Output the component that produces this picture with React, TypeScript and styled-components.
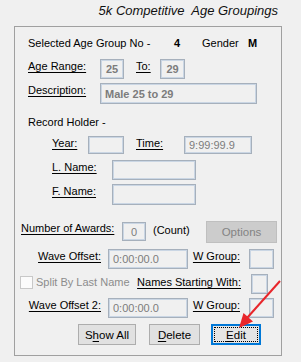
import React from 'react';
import styled, { createGlobalStyle } from 'styled-components';

const GlobalStyle = createGlobalStyle`
    body {
        margin: 0;
        background: #f0f0f0;
        font-family: 'Liberation Sans', Arial, sans-serif;
        font-size: 11px;
        color: #000;
    }
`;

const Page = styled.div`
    position: relative;
    width: 301px;
    height: 362px;
    overflow: hidden;
`;

const Title = styled.div`
    padding: 3px 23px 0 0;
    margin-bottom: 8px;
    text-align: right;
    font-size: 13px;
    font-style: italic;
    line-height: 15px;
    white-space: pre;
    color: #111;
`;

const Frame = styled.div`
    margin-left: 14px;
    width: 268px;
    box-sizing: border-box;
    border: 1px solid #a0a0a0;
    padding-bottom: 10px;
`;

const Row = styled.div<{ $mt: number; $pl: number; $h: number }>`
    display: flex;
    align-items: flex-start;
    margin-top: ${(p) => p.$mt}px;
    padding-left: ${(p) => p.$pl}px;
    height: ${(p) => p.$h}px;
`;

const Label = styled.span<{
    $w?: number;
    $right?: boolean;
    $u?: boolean;
    $bold?: boolean;
    $muted?: boolean;
    $ml?: number;
    $mt?: number;
}>`
    display: block;
    flex: none;
    width: ${(p) => (p.$w ? `${p.$w}px` : 'auto')};
    margin-left: ${(p) => p.$ml || 0}px;
    margin-top: ${(p) => p.$mt || 0}px;
    line-height: 14px;
    white-space: nowrap;
    text-align: ${(p) => (p.$right ? 'right' : 'left')};
    text-decoration: ${(p) => (p.$u ? 'underline' : 'none')};
    text-underline-offset: 2px;
    font-weight: ${(p) => (p.$bold ? 'bold' : 'normal')};
    color: ${(p) => (p.$muted ? '#8c8c8c' : '#000')};
`;

const Box = styled.div<{
    $w: number;
    $h: number;
    $ml?: number;
    $mt?: number;
    $center?: boolean;
    $bold?: boolean;
}>`
    flex: none;
    display: flex;
    align-items: center;
    justify-content: ${(p) => (p.$center ? 'center' : 'flex-start')};
    box-sizing: border-box;
    width: ${(p) => p.$w}px;
    height: ${(p) => p.$h}px;
    margin-left: ${(p) => p.$ml || 0}px;
    margin-top: ${(p) => p.$mt || 0}px;
    padding-left: ${(p) => (p.$center ? 0 : 4)}px;
    border: 1px solid #a6b0bc;
    box-shadow: inset 0 0 0 1px #cad6e4;
    background: #f0f0f0;
    color: #7c7c7c;
    font-weight: ${(p) => (p.$bold ? 'bold' : 'normal')};
`;

const Check = styled.div`
    flex: none;
    width: 13px;
    height: 13px;
    margin-top: 2px;
    box-sizing: border-box;
    border: 1px solid #c8c8c8;
    background: #fbfbfb;
`;

const Button = styled.div<{ $w: number; $ml?: number; $focus?: boolean; $disabled?: boolean; $h?: number }>`
    position: relative;
    flex: none;
    display: flex;
    align-items: center;
    justify-content: center;
    box-sizing: border-box;
    width: ${(p) => p.$w}px;
    height: ${(p) => p.$h || 21}px;
    margin-left: ${(p) => p.$ml || 0}px;
    border: ${(p) =>
        p.$focus ? '2px solid #0078d7' : p.$disabled ? '1px solid #bfbfbf' : '1px solid #adadad'};
    background: ${(p) => (p.$disabled ? '#cccccc' : p.$focus ? '#e5e5e5' : '#e1e1e1')};
    color: ${(p) => (p.$disabled ? '#838383' : '#000')};
    font-size: 11.5px;

    &::after {
        content: '';
        display: ${(p) => (p.$focus ? 'block' : 'none')};
        position: absolute;
        inset: 1px;
        border: 1px dotted #000;
    }

    & u {
        text-underline-offset: 2px;
    }
`;

const Arrow = styled.svg`
    position: absolute;
    left: 0;
    top: 0;
    pointer-events: none;
`;

const App = () => (
    <Page>
        <GlobalStyle />
        <Title>{'5k Competitive  Age Groupings'}</Title>
        <Frame>
            <Row $mt={9} $pl={13} $h={14}>
                <Label $w={146}>Selected Age Group No -</Label>
                <Label $w={28} $bold>
                    4
                </Label>
                <Label $w={46}>Gender</Label>
                <Label $bold>M</Label>
            </Row>
            <Row $mt={9} $pl={13} $h={20}>
                <Label $w={72} $u>
                    Age Range:
                </Label>
                <Box $w={24} $h={20} $center $bold>
                    25
                </Box>
                <Label $w={24} $ml={12} $u>
                    To:
                </Label>
                <Box $w={25} $h={20} $center $bold>
                    29
                </Box>
            </Row>
            <Row $mt={4} $pl={13} $h={21}>
                <Label $w={72} $u>
                    Description:
                </Label>
                <Box $w={157} $h={21} $bold>
                    Male 25 to 29
                </Box>
            </Row>
            <Row $mt={11} $pl={13} $h={14}>
                <Label>Record Holder -</Label>
            </Row>
            <Row $mt={7} $pl={37} $h={18}>
                <Label $w={36} $u>
                    Year:
                </Label>
                <Box $w={36} $h={18} />
                <Label $w={48} $ml={12} $u>
                    Time:
                </Label>
                <Box $w={68} $h={18}>
                    9:99:99.9
                </Box>
            </Row>
            <Row $mt={6} $pl={37} $h={20}>
                <Label $w={60} $u>
                    L. Name:
                </Label>
                <Box $w={84} $h={20} />
            </Row>
            <Row $mt={4} $pl={37} $h={21}>
                <Label $w={60} $u>
                    F. Name:
                </Label>
                <Box $w={84} $h={21} />
            </Row>
            <Row $mt={16} $pl={6} $h={22}>
                <Label $w={101} $u>
                    Number of Awards:
                </Label>
                <Box $w={24} $h={19} $mt={1} $center>
                    0
                </Box>
                <Label $w={53} $ml={7} $mt={2}>
                    (Count)
                </Label>
                <Button $w={71} $h={22} $disabled>
                    Options
                </Button>
            </Row>
            <Row $mt={6} $pl={5} $h={20}>
                <Label $w={81} $right $u>
                    Wave Offset:
                </Label>
                <Box $w={80} $h={20} $ml={7}>
                    0:00:00.0
                </Box>
                <Label $w={52} $right $u>
                    W Group:
                </Label>
                <Box $w={25} $h={20} $ml={9} />
            </Row>
            <Row $mt={5} $pl={5} $h={20}>
                <Check />
                <Label $w={100} $ml={3} $mt={1} $muted>
                    Split By Last Name
                </Label>
                <Label $w={105} $mt={1} $right $u>
                    Names Starting With:
                </Label>
                <Box $w={17} $h={20} $ml={10} />
            </Row>
            <Row $mt={4} $pl={5} $h={20}>
                <Label $w={81} $right $u>
                    Wave Offset 2:
                </Label>
                <Box $w={80} $h={20} $ml={7}>
                    0:00:00.0
                </Box>
                <Label $w={52} $right $u>
                    W Group:
                </Label>
                <Box $w={25} $h={20} $ml={9} />
            </Row>
            <Row $mt={6} $pl={63} $h={21}>
                <Button $w={58}>
                    <span>
                        S<u>h</u>ow All
                    </span>
                </Button>
                <Button $w={51} $ml={13}>
                    <span>
                        <u>D</u>elete
                    </span>
                </Button>
                <Button $w={50} $ml={11} $focus>
                    <span>
                        <u>E</u>dit
                    </span>
                </Button>
            </Row>
        </Frame>
        <Arrow width={301} height={362} viewBox="0 0 301 362">
            <line x1={280} y1={281} x2={247} y2={318} stroke="#e8262b" strokeWidth={2} />
            <polygon points="239,328 243.5,313 253,321.5" fill="#e8262b" />
        </Arrow>
    </Page>
);

export default App;
